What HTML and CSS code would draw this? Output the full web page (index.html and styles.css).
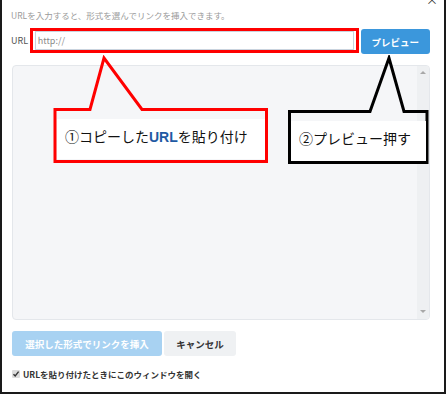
FILE: index.html
```html
<!DOCTYPE html>
<html lang="ja">
<head>
  <meta charset="UTF-8">
  <title>リンクを挿入</title>
  <link rel="stylesheet" href="styles.css">
</head>
<body>
  <div class="frame">
    <span class="close">×</span>

    <p class="hint">URLを入力すると、形式を選んでリンクを挿入できます。</p>

    <div class="url-row">
      <label class="url-label" for="url">URL</label>
      <div class="url-field">
        <input type="text" id="url" placeholder="http://">
      </div>
      <button class="preview-btn">プレビュー</button>
    </div>

    <div class="preview-panel">
      <div class="panel-body"></div>
      <div class="scrollbar">
        <span class="arrow up"></span>
        <span class="arrow down"></span>
      </div>
    </div>

    <div class="actions">
      <button class="insert-btn">選択した形式でリンクを挿入</button>
      <button class="cancel-btn">キャンセル</button>
    </div>

    <label class="open-option">
      <span class="check">
        <svg width="8" height="8" viewBox="0 0 8 8"><path d="M1.5 4.2 L3.2 6 L6.6 1.6" fill="none" stroke="#333" stroke-width="1.4"/></svg>
      </span>
      URLを貼り付けたときにこのウィンドウを開く
    </label>

    <!-- annotations -->
    <div class="callout callout-copy">
      <svg width="216" height="110" viewBox="0 0 216 110">
        <polygon points="2,54.5 37,54.5 51,3 89,54.5 213.5,54.5 213.5,106.5 2,106.5" fill="none" stroke="#ff0000" stroke-width="3"/>
      </svg>
      <div class="callout-text">①コピーした<b>URL</b>を貼り付け</div>
    </div>

    <div class="callout callout-preview">
      <svg width="145" height="110" viewBox="0 0 145 110">
        <polygon points="3.5,56.5 84,56.5 103,3 118,56.5 141,56.5 141,107.5 3.5,107.5" fill="none" stroke="#000" stroke-width="3"/>
      </svg>
      <div class="callout-text">②プレビュー押す</div>
    </div>
  </div>
</body>
</html>
```

FILE: styles.css
```css
body {
  margin: 0;
  background: #fff;
  font-family: "Noto Sans CJK JP", "Noto Sans", sans-serif;
}
.frame {
  position: relative;
  width: 446px;
  height: 394px;
  box-sizing: border-box;
  border: 2px solid #1a1a1a;
  border-top: none;
  padding: 9px 14px 0 10px;
  overflow: hidden;
}
.close {
  position: absolute;
  top: -6px;
  right: 6px;
  font-size: 12px;
  line-height: 12px;
  color: #333;
}
.hint {
  margin: 0 0 0 -1px;
  font-size: 8.5px;
  line-height: 12px;
  color: #9a9a9a;
}
.url-row {
  display: flex;
  align-items: flex-start;
  margin-top: 7px;
  height: 26px;
}
.url-label {
  width: 19px;
  margin-left: -1px;
  font-size: 9px;
  line-height: 26px;
  color: #555;
}
.url-field {
  width: 322px;
  height: 19px;
  border: 3px solid #ff0000;
  padding: 0 2px;
}
.url-field input {
  display: block;
  width: 100%;
  height: 19px;
  box-sizing: border-box;
  border: 1px solid #c9d3de;
  padding: 0 2px;
  font-family: inherit;
  font-size: 9px;
  outline: none;
}
.url-field input::placeholder {
  color: #8a8a8a;
}
.preview-btn {
  margin: 1px 0 0 2px;
  width: 70px;
  height: 25px;
  border: none;
  border-radius: 3px;
  background: #3b97dc;
  color: #fff;
  font-family: inherit;
  font-size: 9.5px;
  font-weight: bold;
}
.preview-panel {
  display: flex;
  margin-top: 11px;
  height: 255px;
  box-sizing: border-box;
  border: 1px solid #e4e7eb;
  border-radius: 4px;
  background: #f5f6f8;
  overflow: hidden;
}
.panel-body {
  flex: 1;
}
.scrollbar {
  position: relative;
  width: 12px;
  background: #eef0f2;
}
.arrow {
  position: absolute;
  left: 3px;
  width: 0;
  height: 0;
  border-left: 3px solid transparent;
  border-right: 3px solid transparent;
}
.arrow.up {
  top: 5px;
  border-bottom: 3px solid #a8a8a8;
}
.arrow.down {
  bottom: 6px;
  border-top: 3px solid #a8a8a8;
}
.actions {
  display: flex;
  gap: 2px;
  margin-top: 11px;
}
.actions button {
  height: 25px;
  border: none;
  border-radius: 3px;
  font-family: inherit;
  font-size: 9.5px;
  font-weight: bold;
  padding: 0;
}
.insert-btn {
  width: 150px;
  background: #a8d2f2;
  color: #fff;
}
.cancel-btn {
  width: 72px;
  background: #eff1f3;
  color: #333;
}
.open-option {
  display: flex;
  align-items: center;
  gap: 3px;
  margin-top: 12px;
  font-size: 8.5px;
  font-weight: bold;
  line-height: 12px;
  color: #333;
}
.check {
  display: block;
  width: 8px;
  height: 8px;
  background: #dcdcdc;
  border-radius: 1px;
}
.check svg {
  display: block;
}
.callout {
  position: absolute;
  top: 55px;
  height: 110px;
}
.callout svg {
  position: absolute;
  top: 0;
  left: 0;
}
.callout-copy {
  left: 51px;
  width: 216px;
}
.callout-preview {
  left: 284px;
  width: 145px;
}
.callout-text {
  position: absolute;
  height: 40px;
  background: #fff;
  font-size: 14px;
  line-height: 34px;
  color: #111;
  white-space: nowrap;
  box-sizing: border-box;
  padding-left: 8px;
}
.callout-copy .callout-text {
  left: 4px;
  top: 64px;
  width: 208px;
}
.callout-preview .callout-text {
  left: 5px;
  top: 66px;
  width: 135px;
}
.callout-text b {
  color: #1f5aa3;
  font-family: "Liberation Sans", sans-serif;
}
```
